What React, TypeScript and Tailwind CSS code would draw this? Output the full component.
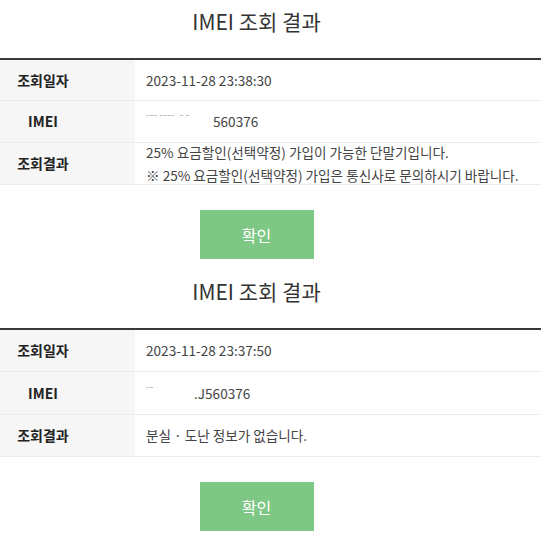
import React from "react";

type Row = { label: string; lines: React.ReactNode[]; h: string };

type Result = { rows: Row[] };

// 가려진 IMEI 앞자리
const Masked = ({ text, w }: { text: string; w: string }) => (
  <span className={`inline-block ${w} text-[#9a9a9a] text-[11px] align-top leading-[14px] whitespace-pre`}>
    {text}
  </span>
);

const results: Result[] = [
  {
    rows: [
      { label: "조회일자", lines: ["2023-11-28 23:38:30"], h: "h-[41px]" },
      {
        label: "IMEI",
        lines: [
          <>
            <Masked text={"⁻⁻⁻ ⁻⁻⁻⁻  ⁻ ⁻"} w="w-[67px]" />
            <span>560376</span>
          </>,
        ],
        h: "h-[42px]",
      },
      {
        label: "조회결과",
        lines: [
          "25% 요금할인(선택약정) 가입이 가능한 단말기입니다.",
          "※ 25% 요금할인(선택약정) 가입은 통신사로 문의하시기 바랍니다.",
        ],
        h: "h-[42px]",
      },
    ],
  },
  {
    rows: [
      { label: "조회일자", lines: ["2023-11-28 23:37:50"], h: "h-[42px]" },
      {
        label: "IMEI",
        lines: [
          <>
            <Masked text={"⁻⁻                 "} w="w-[48px]" />
            <span>.J560376</span>
          </>,
        ],
        h: "h-[43px]",
      },
      { label: "조회결과", lines: ["분실 · 도난 정보가 없습니다."], h: "h-[42px]" },
    ],
  },
];

const ResultSection = ({ result }: { result: Result }) => (
  <section className="flex flex-col pb-[11px]">
    {/* 제목 */}
    <div className="pr-[28px] pt-[6px] mb-[22px]">
      <h1 className="text-center text-[21px] leading-[30px] font-normal text-[#333]">
        IMEI 조회 결과
      </h1>
    </div>

    {/* 표 */}
    <div className="border-t-2 border-[#3a3a3a]">
      {result.rows.map((row) => (
        <div
          key={row.label}
          className={`flex ${row.h} border-b border-[#ececec]`}
        >
          <div className="w-[135px] shrink-0 bg-[#f6f6f6] flex items-center">
            <span className="w-[86px] text-center text-[14px] font-bold text-[#222]">
              {row.label}
            </span>
          </div>
          <div className="flex-1 flex flex-col justify-center pl-[11px] text-[13.6px] leading-[23px] text-[#444] whitespace-pre">
            {row.lines.map((line, i) => (
              <span key={i}>{line}</span>
            ))}
          </div>
        </div>
      ))}
    </div>

    {/* 버튼 */}
    <div className="pr-[28px] mt-[25px] flex justify-center">
      <button className="w-[114px] h-[49px] bg-[#7ec784] text-white text-[16px] flex items-center justify-center">
        확인
      </button>
    </div>
  </section>
);

export default function App() {
  return (
    <div
      className="w-[541px] h-[541px] overflow-hidden bg-white"
      style={{ fontFamily: '"Noto Sans CJK KR", "Noto Sans", sans-serif' }}
    >
      {results.map((r, i) => (
        <ResultSection key={i} result={r} />
      ))}
    </div>
  );
}
